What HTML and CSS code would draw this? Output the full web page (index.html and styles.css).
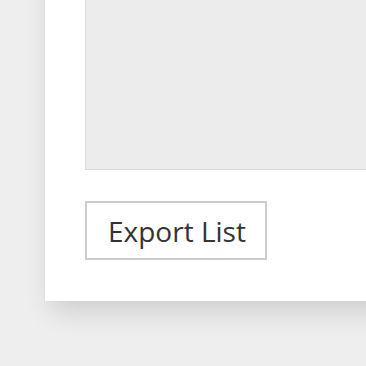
FILE: index.html
```html
<!DOCTYPE html>
<html>
<head>
<meta charset="utf-8">
<link rel="stylesheet" href="styles.css">
</head>
<body>
<div class="card">
  <div class="list-area"></div>
  <button class="export-btn">Export List</button>
</div>
</body>
</html>
```
FILE: styles.css
```css
html, body {
  margin: 0;
  padding: 0;
  background: #eeeeee;
  overflow: hidden;
  height: 100%;
}
body {
  font-family: "Open Sans", "Liberation Sans", sans-serif;
}
.card {
  margin-top: -100px;
  margin-left: 45px;
  width: 500px;
  padding: 40px 40px 41px;
  background: #ffffff;
  box-shadow: 0 16px 26px -6px rgba(0, 0, 0, 0.14), 0 0 2px rgba(0, 0, 0, 0.04);
  display: flex;
  flex-direction: column;
  align-items: flex-start;
  gap: 31px;
}
.list-area {
  align-self: stretch;
  height: 228px;
  background: #ececec;
  border: 1px solid #dcdcdc;
}
.export-btn {
  font-family: "Open Sans", "Liberation Sans", sans-serif;
  font-size: 28px;
  color: #333333;
  background: #ffffff;
  border: 2px solid #cccccc;
  height: 59px;
  padding: 0 19px 0 21px;
  margin: 0;
  line-height: 1;
}
```
